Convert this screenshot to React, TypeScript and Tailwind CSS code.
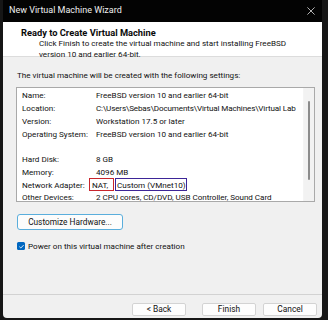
import type { ReactNode } from "react"

const topRows: [string, ReactNode][] = [
  ["Name:", "FreeBSD version 10 and earlier 64-bit"],
  ["Location:", <span className="tracking-[-0.15px]">C:\Users\Sebas\Documents\Virtual Machines\Virtual Lab</span>],
  ["Version:", "Workstation 17.5 or later"],
  ["Operating System:", "FreeBSD version 10 and earlier 64-bit"],
]

const bottomRows: [string, ReactNode][] = [
  ["Hard Disk:", "8 GB"],
  ["Memory:", "4096 MB"],
  [
    "Network Adapter:",
    <span className="-ml-[7px] flex items-center">
      <span className="flex h-[13px] w-[25px] items-center border border-[#c8252c] pl-[2px]">NAT,</span>
      <span className="ml-[1px] flex h-[13px] w-[72px] items-center border border-[#3d2597] pl-[1px]">Custom (VMnet10)</span>
    </span>,
  ],
  ["Other Devices:", <span className="tracking-[-0.05px]">2 CPU cores, CD/DVD, USB Controller, Sound Card</span>],
]

function Row({ label, value }: { label: string; value: ReactNode }) {
  return (
    <div className="flex h-[12.75px] items-center whitespace-nowrap">
      <span className="w-[74px] shrink-0">{label}</span>
      {value}
    </div>
  )
}

function Btn({ children, className = "" }: { children: ReactNode; className?: string }) {
  return (
    <button className={`flex h-[13px] w-[54px] items-center justify-center rounded-[2px] border border-[#d3d3d3] bg-[#fdfdfd] text-[8.4px] leading-none text-[#111] ${className}`}>
      {children}
    </button>
  )
}

export default function App() {
  return (
    <div
      className="flex h-[320px] w-[328px] bg-[#161616] pb-[2px] pl-[3px] pr-[6px] text-[8.1px] text-[#111]"
      style={{ fontFamily: "Roboto, 'Liberation Sans', sans-serif" }}
    >
      <div className="flex flex-1 flex-col overflow-hidden rounded-b-[4px] bg-[#f0f0f0]">
        <div className="flex h-[22px] shrink-0 items-center justify-between bg-[#030303] pl-[6px] pr-[7px] text-[9px] text-[#f0f0f0]">
          <span>New Virtual Machine Wizard</span>
          <svg viewBox="0 0 10 10" className="h-[8px] w-[8px]">
            <path d="M0.5 0.5 L9.5 9.5 M9.5 0.5 L0.5 9.5" stroke="#e0e0e0" strokeWidth="1" fill="none" />
          </svg>
        </div>
        <div className="h-[35px] shrink-0 border-b border-[#dcdcdc] bg-white pl-[18px] pt-[5px]">
          <div className="text-[9.3px] font-bold leading-[11px] text-[#0a0a0a]">Ready to Create Virtual Machine</div>
          <div className="whitespace-nowrap pl-[18px] leading-[10.5px]">
            Click Finish to create the virtual machine and start installing FreeBSD
            <br />
            version 10 and earlier 64-bit.
          </div>
        </div>
        <div className="mt-[12px] whitespace-nowrap pl-[14px] leading-[12px]">
          The virtual machine will be created with the following settings:
        </div>
        <div className="ml-[13px] mr-[7px] mt-[6px] flex h-[115px] border border-[#a9a9a9] bg-white">
          <div className="flex-1 overflow-hidden pl-[5px] pt-[1px]">
            {topRows.map(([l, v]) => (
              <Row key={l} label={l} value={v} />
            ))}
            <div className="h-[12.75px]" />
            {bottomRows.map(([l, v]) => (
              <Row key={l} label={l} value={v} />
            ))}
          </div>
          <div className="flex w-[11px] justify-center border-l border-[#f4f4f4] bg-[#f2f2f2] pt-[13px]">
            <div className="h-[79px] w-[2px] rounded-full bg-[#8c8c8c]" />
          </div>
        </div>
        <div className="mt-[12px] pl-[14px]">
          <button className="flex h-[16px] w-[106px] items-center justify-center rounded-[3px] border border-[#5aaedc] bg-[#fcfcfc] text-[8.3px] leading-none">
            Customize Hardware...
          </button>
        </div>
        <label className="mt-[10px] flex h-[12px] items-center gap-[3px] whitespace-nowrap pl-[14px]">
          <span className="flex h-[8px] w-[8px] items-center justify-center rounded-[1.5px] bg-[#0067c0]">
            <svg viewBox="0 0 8 8" className="h-[7px] w-[7px]">
              <path d="M1.6 4.2 L3.2 5.7 L6.4 2.4" fill="none" stroke="white" strokeWidth="1" />
            </svg>
          </span>
          <span>Power on this virtual machine after creation</span>
        </label>
        <div className="flex-1" />
        <div className="h-[24px] shrink-0 border-t border-[#d2d2d2]">
          <div className="flex justify-end gap-[7px] pr-[5px] pt-[8px]">
            <Btn className="mr-[9px] w-[44px]">&lt; Back</Btn>
            <Btn>Finish</Btn>
            <Btn>Cancel</Btn>
          </div>
        </div>
      </div>
    </div>
  )
}
